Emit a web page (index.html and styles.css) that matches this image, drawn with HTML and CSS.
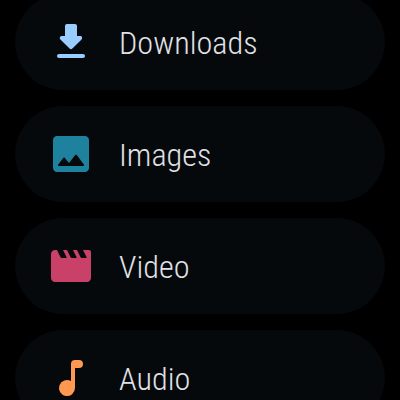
FILE: index.html
```html
<!DOCTYPE html>
<html lang="en">
<head>
<meta charset="utf-8">
<title>Files</title>
<link rel="stylesheet" href="styles.css">
</head>
<body>
<main class="list">
  <div class="item">
    <svg class="icon downloads" viewBox="0 0 24 24"><path d="M16.590 9H15V4c0-.55-.45-1-1-1h-4c-.55 0-1 .45-1 1v5H7.410c-.89 0-1.340 1.080-.71 1.710l4.590 4.590c.39.39 1.020.39 1.410 0l4.590-4.590c.63-.63.19-1.710-.7-1.710zM5 19c0 .55.45 1 1 1h12c.55 0 1-.45 1-1s-.45-1-1-1H6c-.55 0-1 .45-1 1z"/></svg>
    <span class="label">Downloads</span>
  </div>
  <div class="item">
    <svg class="icon images" viewBox="0 0 24 24"><path d="M21 19V5c0-1.100-.9-2-2-2H5c-1.100 0-2 .9-2 2v14c0 1.100.9 2 2 2h14c1.100 0 2-.9 2-2zM8.900 13.980l2.100 2.530 3.100-3.990c.2-.26.6-.26.8.01l3.510 4.680c.25.33.01.8-.4.8H6.020c-.42 0-.65-.48-.39-.81L8.120 14c.19-.26.57-.27.78-.02z"/></svg>
    <span class="label">Images</span>
  </div>
  <div class="item">
    <svg class="icon video" viewBox="0 0 24 24"><path d="M18 4l1.820 3.640c.08.16-.04.36-.22.36h-1.980c-.38 0-.73-.21-.89-.55L15 4h-2l1.820 3.640c.08.16-.04.36-.22.36h-1.980c-.38 0-.73-.21-.89-.55L10 4H8l1.820 3.640c.08.16-.04.36-.22.36H7.620c-.38 0-.73-.21-.9-.55L5 4H4c-1.100 0-2 .9-2 2v12c0 1.100.9 2 2 2h16c1.100 0 2-.9 2-2V5c0-.55-.45-1-1-1h-3z"/></svg>
    <span class="label">Video</span>
  </div>
  <div class="item">
    <svg class="icon audio" viewBox="0 0 24 24"><path d="M12 5v8.550A4 4 0 1 0 14 17V7h2a2 2 0 0 0 0-4h-2a2 2 0 0 0-2 2z"/></svg>
    <span class="label">Audio</span>
  </div>
</main>
</body>
</html>
```
FILE: styles.css
```css
body {
  margin: 0;
  background: #000;
  height: 400px;
  overflow: hidden;
}

.list {
  display: flex;
  flex-direction: column;
  gap: 16px;
  box-sizing: border-box;
  height: 406px;
  margin: -6px 15px 0;
  overflow: hidden;
}

.item {
  display: flex;
  flex: none;
  align-items: center;
  box-sizing: border-box;
  height: 96px;
  padding-left: 32px;
  gap: 24px;
  border-radius: 48px;
  background: #05090c;
}

.icon {
  flex: none;
  width: 48px;
  height: 48px;
}

.downloads { fill: #99ccff; }
.images { fill: #1e829f; }
.video { fill: #c94069; }
.audio { fill: #ff9850; }

.label {
  padding-top: 2px;
  font-family: Roboto, sans-serif;
  font-size: 32.2px;
  font-weight: 300;
  font-stretch: 75%;
  color: #e2e1e5;
}
```
